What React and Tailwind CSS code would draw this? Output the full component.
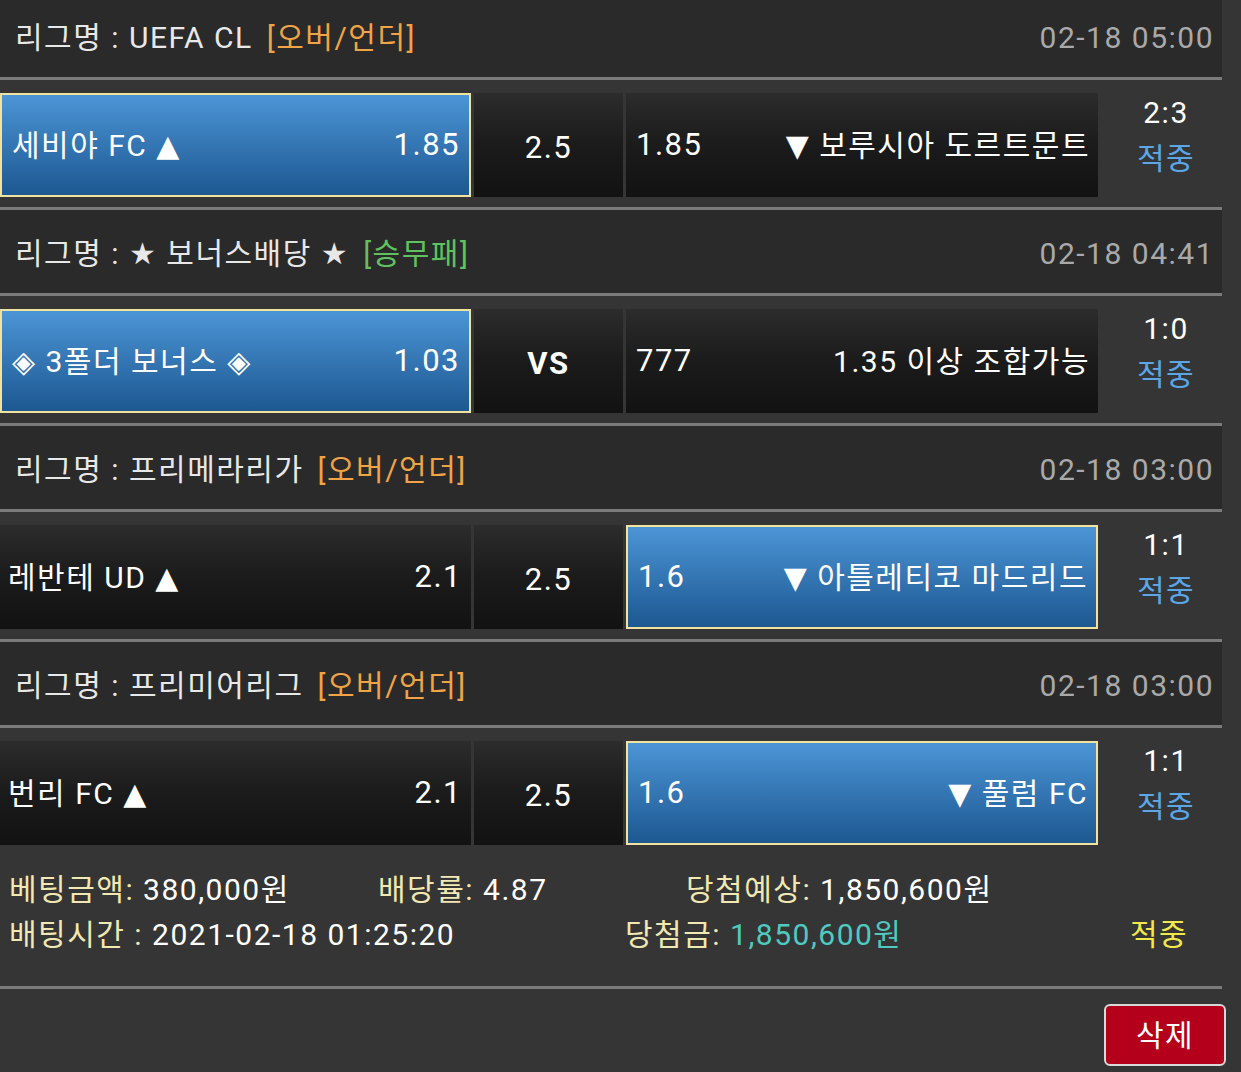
import React from 'react';

const FONT = { fontFamily: 'Roboto, "DejaVu Sans", "Noto Sans CJK KR", sans-serif' };

// bet slip rows
const games = [
  {
    league: 'UEFA CL',
    tag: '[오버/언더]',
    tagColor: 'text-[#f0a445]',
    time: '02-18 05:00',
    home: '세비야 FC ▲',
    homeOdds: '1.85',
    mid: '2.5',
    awayOdds: '1.85',
    away: '▼ 보루시아 도르트문트',
    pick: 'home',
    score: '2:3',
  },
  {
    league: '★ 보너스배당 ★',
    tag: '[승무패]',
    tagColor: 'text-[#5fc25f]',
    time: '02-18 04:41',
    home: '◈ 3폴더 보너스 ◈',
    homeOdds: '1.03',
    mid: 'VS',
    awayOdds: '777',
    away: '1.35 이상 조합가능',
    pick: 'home',
    score: '1:0',
  },
  {
    league: '프리메라리가',
    tag: '[오버/언더]',
    tagColor: 'text-[#f0a445]',
    time: '02-18 03:00',
    home: '레반테 UD ▲',
    homeOdds: '2.1',
    mid: '2.5',
    awayOdds: '1.6',
    away: '▼ 아틀레티코 마드리드',
    pick: 'away',
    score: '1:1',
  },
  {
    league: '프리미어리그',
    tag: '[오버/언더]',
    tagColor: 'text-[#f0a445]',
    time: '02-18 03:00',
    home: '번리 FC ▲',
    homeOdds: '2.1',
    mid: '2.5',
    awayOdds: '1.6',
    away: '▼ 풀럼 FC',
    pick: 'away',
    score: '1:1',
  },
];

const Cell = ({ selected, className, children }) => (
  <div
    className={
      'flex items-center h-[104px] text-white ' +
      (selected
        ? 'border-2 border-[#f2e2a0] bg-gradient-to-b from-[#4c95d6] to-[#1c5891] '
        : 'bg-gradient-to-b from-[#2c2c2c] via-[#1b1b1b] to-[#121212] ') +
      className
    }
  >
    {children}
  </div>
);

const Line = () => <div className="h-[3px] bg-[#7b7b7b]" />;

const Game = ({ g, last }) => (
  <>
    <div className="h-[83px] bg-[#2a2a2a] flex items-center justify-between pl-[15px] pr-[8px] pt-[4px]">
      <div className="flex items-center text-[30px] text-[#e8e8e8]">
        <span>리그명 : {g.league}</span>
        <span className={'ml-[14px] ' + g.tagColor}>{g.tag}</span>
      </div>
      <span className="text-[30px] text-[#a9a9a9]">{g.time}</span>
    </div>
    <Line />
    <div className="flex h-[127px] bg-[#353535]">
      <div className="flex gap-[3px] pt-[13px]">
        <Cell
          selected={g.pick === 'home'}
          className={'w-[471px] justify-between ' + (g.pick === 'home' ? 'pl-[10px] pr-[9px]' : 'pl-[8px] pr-[9px]')}
        >
          <span className="text-[30px]">{g.home}</span>
          <span className="text-[31px]">{g.homeOdds}</span>
        </Cell>
        <Cell className="w-[149px] justify-center pt-[6px]">
          <span className={'text-[31px] ' + (g.mid === 'VS' ? 'font-bold' : '')}>{g.mid}</span>
        </Cell>
        <Cell
          selected={g.pick === 'away'}
          className={'w-[472px] justify-between ' + (g.pick === 'away' ? 'pl-[10px] pr-[8px]' : 'pl-[10px] pr-[8px]')}
        >
          <span className="text-[31px]">{g.awayOdds}</span>
          <span className="text-[30px]">{g.away}</span>
        </Cell>
      </div>
      <div className="flex-1 flex flex-col items-center pt-[10px] pl-[12px] leading-[46px]">
        <span className="text-[30px] text-white">{g.score}</span>
        <span className="text-[30px] text-[#5aa6e6]">적중</span>
      </div>
    </div>
    {!last && <Line />}
  </>
);

export default function App() {
  return (
    <div className="min-h-screen bg-[#353535] overflow-hidden tracking-[1.5px]" style={FONT}>
      <div className="w-[1222px] -mt-[6px]">
        {games.map((g, i) => (
          <Game key={i} g={g} last={i === games.length - 1} />
        ))}
        <div className="pt-[12px] pb-[29px] pl-[9px] text-[30px] leading-[45px] text-white">
          <div className="flex">
            <div className="w-[369px]">
              <span className="text-[#f1e8b2]">베팅금액:</span> 380,000원
            </div>
            <div className="w-[308px]">
              <span className="text-[#f1e8b2]">배당률:</span> 4.87
            </div>
            <div>
              <span className="text-[#f1e8b2]">당첨예상:</span> 1,850,600원
            </div>
          </div>
          <div className="flex">
            <div className="w-[616px]">
              <span className="text-[#f1e8b2]">배팅시간 :</span> 2021-02-18 01:25:20
            </div>
            <div className="w-[505px]">
              <span className="text-[#f1e8b2]">당첨금:</span>{' '}
              <span className="text-[#4fcac0]">1,850,600원</span>
            </div>
            <div className="text-[#f2e84a]">적중</div>
          </div>
        </div>
        <Line />
      </div>
      <div className="flex justify-end pr-[15px] pt-[15px]">
        <button className="w-[122px] h-[62px] rounded-[6px] border-2 border-[#d9d9d9] bg-[#b4001b] text-white text-[30px]">
          삭제
        </button>
      </div>
    </div>
  );
}
